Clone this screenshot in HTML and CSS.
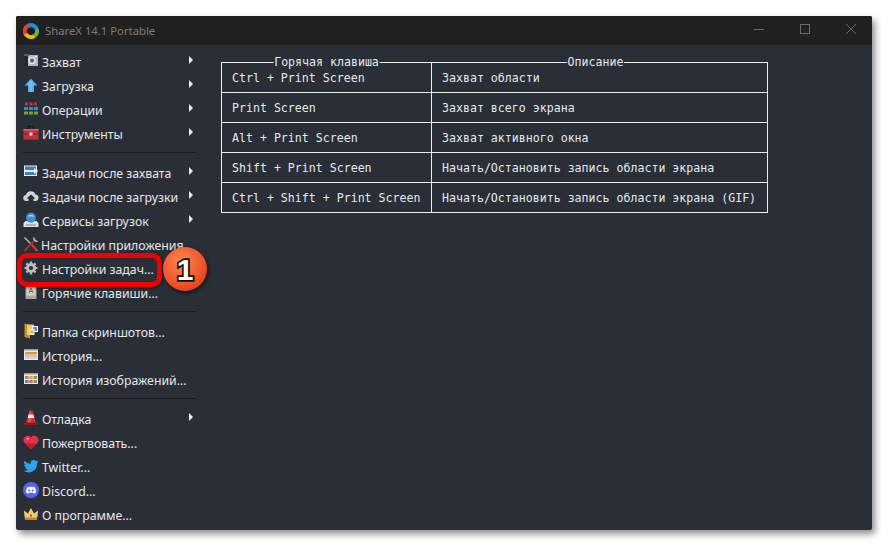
FILE: index.html
```html
<!DOCTYPE html>
<html lang="ru">
<head>
<meta charset="utf-8">
<title>ShareX</title>
<link rel="stylesheet" href="styles.css">
</head>
<body>
<div class="window">
  <header class="titlebar">
    <svg class="logo" width="16" height="16" viewBox="0 0 16 16" fill="none" stroke-width="4">
      <path d="M2.800 11.500A6 6 0 0 1 6 2.300" stroke="#e5402a"/>
      <path d="M5.500 2.600A6 6 0 0 1 13.900 7" stroke="#1d8fe3"/>
      <path d="M13.900 6.500A6 6 0 0 1 10.500 13.500" stroke="#63b52c"/>
      <path d="M11 13.200A6 6 0 0 1 2.600 10.800" stroke="#f5b70f"/>
      <circle cx="8" cy="8" r="2.500" fill="#17191d" stroke="none"/>
    </svg>
    <span class="title">ShareX 14.1 Portable</span>
    <div class="controls">
      <svg width="12" height="12" viewBox="0 0 12 12"><path d="M1 6.500H11" stroke="#6b6b6b" fill="none"/></svg>
      <svg width="12" height="12" viewBox="0 0 12 12"><rect x="1.500" y="1.500" width="9" height="9" stroke="#6b6b6b" fill="none"/></svg>
      <svg width="12" height="12" viewBox="0 0 12 12"><path d="M1 1L11 11M11 1L1 11" stroke="#6b6b6b" fill="none"/></svg>
    </div>
  </header>
  <div class="main">
    <nav class="menu">
      <div class="item sub"><svg class="ic" viewBox="0 0 16 16"><rect x="1" y="2" width="14" height="11" fill="#b5b5b5"/><rect x="1" y="3" width="4" height="10" fill="#26262a"/><rect x="1" y="1" width="5" height="2" fill="#5a5a5a"/><rect x="12" y="3" width="2" height="1" fill="#eee"/><circle cx="9" cy="7.500" r="3.800" fill="#e4e4ec"/><circle cx="9" cy="7.500" r="2.200" fill="#6a76a8"/><circle cx="9" cy="7.500" r="1" fill="#3d4570"/></svg><span>Захват</span></div>
      <div class="item sub"><svg class="ic" viewBox="0 0 16 16"><path d="M8 1.500L14.500 8.500H11V15H5V8.500H1.500Z" fill="#46a6f0"/><path d="M8 3L12 8.500H9.500V15H6.500V8.500H4Z" fill="#6fbef5"/></svg><span>Загрузка</span></div>
      <div class="item sub"><svg class="ic" viewBox="0 0 16 16"><g fill="#c8343c"><rect x="2" y="1.500" width="3" height="3"/><rect x="6.500" y="1.500" width="3" height="3"/><rect x="11" y="1.500" width="3" height="3"/></g><g fill="#2e8fd8"><rect x="1" y="6" width="4" height="3"/><rect x="6" y="6" width="4" height="3"/><rect x="11" y="6" width="4" height="3"/></g><g fill="#6bab2e"><rect x="1" y="10.500" width="4" height="3"/><rect x="6" y="10.500" width="4" height="3"/><rect x="11" y="10.500" width="4" height="3"/></g></svg><span>Операции</span></div>
      <div class="item sub"><svg class="ic" viewBox="0 0 16 16"><path d="M5.500 4V1.500H10.500V4" stroke="#1a1a1a" stroke-width="1.400" fill="none"/><rect x="0.500" y="4" width="15" height="10.500" fill="#c0323a"/><rect x="0.500" y="8.500" width="15" height="1" fill="#7d1a1f"/><rect x="0.500" y="4" width="15" height="1.500" fill="#df6066"/><rect x="6.500" y="7.500" width="3" height="3" fill="#f0dede"/></svg><span>Инструменты</span></div>
      <hr class="sep">
      <div class="item sub"><svg class="ic" viewBox="0 0 16 16"><rect x="1" y="1.500" width="13" height="10.500" fill="#eceff3"/><rect x="2" y="2.500" width="11" height="8.500" fill="#3f7fc0"/><path d="M2 6H11V4L15.500 7L11 10V8H2Z" fill="#e6eef8"/></svg><span>Задачи после захвата</span></div>
      <div class="item sub"><svg class="ic" viewBox="0 0 16 16"><path d="M3.500 13A3 3 0 0 1 3 7A5 5 0 0 1 12.500 6.500A3.300 3.300 0 0 1 13 13H10.500V10.500H12.500L8 6.500L3.500 10.500H5.500V13Z" fill="#d0d3d8"/></svg><span>Задачи после загрузки</span></div>
      <div class="item sub"><svg class="ic" viewBox="0 0 16 16"><path d="M2.500 9H13.500L15.500 11V15H0.500V11Z" fill="#dfe2e6"/><rect x="3" y="12.500" width="10" height="1" fill="#7f868c"/><circle cx="8" cy="5.800" r="5" fill="#3f8ed8"/><path d="M4.500 4.500A4 3.200 0 0 1 11.500 4.500Z" fill="#a3d0f2"/></svg><span>Сервисы загрузок</span></div>
      <div class="item tight"><svg class="ic" viewBox="0 0 16 16"><path d="M1.500 1.500L8 8" stroke="#c6c6c6" stroke-width="1.300"/><path d="M8 8L14.500 15" stroke="#d83a3a" stroke-width="2"/><path d="M12.500 3.500L1.500 14.500" stroke="#b02a2a" stroke-width="1.800"/><path d="M11 1.500A2.800 2.800 0 0 0 14.500 5" stroke="#c6c6c6" stroke-width="1.500" fill="none"/></svg><span>Настройки приложения</span></div>
      <div class="item"><svg class="ic" viewBox="0 0 16 16"><circle cx="8" cy="8" r="3.600" fill="none" stroke="#bcbcbc" stroke-width="3"/><path d="M8 1.500V14.500M1.500 8H14.500M3.400 3.400L12.600 12.600M12.600 3.400L3.400 12.600" stroke="#bcbcbc" stroke-width="2.200" stroke-dasharray="2.200 8.600"/></svg><span>Настройки задач...</span></div>
      <div class="item"><svg class="ic" viewBox="0 0 16 16"><rect x="2.500" y="1.500" width="11" height="13.500" fill="#a8a89e"/><rect x="3.500" y="2" width="9" height="9.500" fill="#d0d0c8"/><path d="M6 9L8 4L10 9M6.800 7.500H9.200" stroke="#666" stroke-width="0.900" fill="none"/></svg><span>Горячие клавиши...</span></div>
      <hr class="sep">
      <div class="item"><svg class="ic" viewBox="0 0 16 16"><path d="M1.500 0.500L7 2V15.500L1.500 14Z" fill="#c98f2a"/><path d="M4 1.500H11V12H4Z" fill="#f0c860"/><rect x="9" y="3" width="6" height="6" fill="#f4f4f4"/><rect x="10" y="4" width="4" height="4" fill="#4f93d6"/><rect x="6.500" y="6" width="5" height="6" fill="#fff3c8"/><rect x="7.500" y="7.500" width="3" height="3" fill="#e0a93c"/></svg><span>Папка скриншотов...</span></div>
      <div class="item"><svg class="ic" viewBox="0 0 16 16"><rect x="1" y="2" width="14" height="11" fill="#ececec"/><rect x="1" y="2" width="14" height="1.500" fill="#9a9a9a"/><rect x="2" y="5" width="12" height="2.500" fill="#d69b32"/><rect x="2" y="8.500" width="12" height="1" fill="#a5a5a5"/><rect x="2" y="10.500" width="12" height="1" fill="#bcbcbc"/></svg><span>История...</span></div>
      <div class="item"><svg class="ic" viewBox="0 0 16 16"><rect x="1" y="2" width="14" height="11" fill="#ececec"/><rect x="1" y="2" width="14" height="1.500" fill="#9a9a9a"/><rect x="2" y="5" width="3.500" height="3" fill="#c5803a"/><rect x="6.200" y="5" width="3.500" height="3" fill="#d6ab3a"/><rect x="10.500" y="5" width="3.500" height="3" fill="#a08a5a"/><rect x="2" y="9" width="3.500" height="3" fill="#5b87c0"/><rect x="6.200" y="9" width="3.500" height="3" fill="#b86b9a"/><rect x="10.500" y="9" width="3.500" height="3" fill="#7fa54a"/></svg><span>История изображений...</span></div>
      <hr class="sep">
      <div class="item sub"><svg class="ic" viewBox="0 0 16 16"><path d="M6.500 0.500H9.500L13 13H3Z" fill="#d23030"/><path d="M5.600 4.500H10.400L11.300 8H4.700Z" fill="#f3e8e2"/><path d="M6 1.500H8V13H5Z" fill="#ffffff" opacity=".18"/><rect x="1" y="12.500" width="14" height="2.500" fill="#8a1c1c"/></svg><span>Отладка</span></div>
      <div class="item"><svg class="ic" viewBox="0 0 16 16"><path d="M8 15.500L1.300 8.500A4 4 0 0 1 8 3.500A4 4 0 0 1 14.700 8.500Z" fill="#e6304a"/><path d="M8 15.500L3 9.500H13Z" fill="#b81d35"/><rect x="3.500" y="4" width="2.500" height="1.500" fill="#f58b9a"/></svg><span>Пожертвовать...</span></div>
      <div class="item"><svg class="ic" viewBox="0 0 16 16"><path d="M15.500 3.500A6 6 0 0 1 13.700 4.100A3 3 0 0 0 15 2.400A6 6 0 0 1 13 3.100A3 3 0 0 0 7.800 5.900A8.500 8.500 0 0 1 1.500 2.800A3 3 0 0 0 2.500 6.800A3 3 0 0 1 1 6.400A3 3 0 0 0 3.500 9.400A3 3 0 0 1 2 9.500A3 3 0 0 0 5 11.500A6 6 0 0 1 0.500 12.800A8.500 8.500 0 0 0 14 5.200A6 6 0 0 0 15.500 3.500Z" fill="#2fa3ee"/></svg><span>Twitter...</span></div>
      <div class="item"><svg class="ic" viewBox="0 0 16 16"><circle cx="8" cy="8" r="8" fill="#5865f2"/><path d="M4.300 5.300Q8 4 11.700 5.300Q13.200 8 13 10.600Q11.700 11.600 10.500 11.600L10 10.700H6L5.500 11.600Q4.300 11.600 3 10.600Q2.800 8 4.300 5.300Z" fill="#fff"/><circle cx="6.200" cy="8.500" r="1.100" fill="#5865f2"/><circle cx="9.800" cy="8.500" r="1.100" fill="#5865f2"/></svg><span>Discord...</span></div>
      <div class="item"><svg class="ic" viewBox="0 0 16 16"><path d="M2 13.500L0.800 4.500L5 7.500L8 2L11 7.500L15.200 4.500L14 13.500Z" fill="#f0cc72"/><rect x="2" y="11.500" width="12" height="2.500" fill="#c08a24"/><rect x="7" y="8.500" width="2" height="2" fill="#d8402c"/></svg><span>О программе...</span></div>
    </nav>
    <section class="content">
      <table class="keys">
        <thead>
          <tr><th class="col-key"><span>Горячая клавиша</span></th><th class="col-desc"><span>Описание</span></th></tr>
        </thead>
        <tbody>
          <tr><td>Ctrl + Print Screen</td><td>Захват области</td></tr>
          <tr><td>Print Screen</td><td>Захват всего экрана</td></tr>
          <tr><td>Alt + Print Screen</td><td>Захват активного окна</td></tr>
          <tr><td>Shift + Print Screen</td><td>Начать/Остановить запись области экрана</td></tr>
          <tr><td>Ctrl + Shift + Print Screen</td><td>Начать/Остановить запись области экрана (GIF)</td></tr>
        </tbody>
      </table>
    </section>
  </div>
  <div class="highlight"></div>
  <div class="badge">1</div>
</div>
</body>
</html>
```
FILE: styles.css
```css
* { box-sizing: border-box; }
html, body { margin: 0; height: 100%; background: #fff; overflow: hidden; }
body { padding: 16px; }
.window {
  position: relative;
  width: 856px;
  height: 514px;
  background: #2a2e37;
  border-radius: 2px;
  box-shadow: 3px 4px 7px rgba(0,0,0,.45);
  display: flex;
  flex-direction: column;
  font-family: "Noto Sans", "Open Sans", sans-serif;
  color: #e6e8ea;
}
.titlebar {
  height: 29px;
  flex: none;
  background: #202020;
  display: flex;
  align-items: center;
  padding-left: 7px;
  border-radius: 2px 2px 0 0;
}
.logo { flex: none; }
.title { margin-left: 6px; font-size: 11.3px; color: #7e7e7e; }
.controls { margin-left: auto; display: flex; gap: 34px; padding-right: 15px; margin-top: -3px; }
.controls svg { display: block; }
.main { flex: 1; display: flex; min-height: 0; }
.menu { width: 180px; flex: none; padding: 5px 0 0 7px; }
.item {
  height: 24px;
  display: flex;
  align-items: center;
  font-size: 12.3px;
  position: relative;
  white-space: nowrap;
}
.item span { margin-left: 3px; }
.item.tight span { margin-left: 2px; }
.ic { width: 16px; height: 16px; flex: none; margin-top: -3px; }
.item.sub::after {
  content: "";
  position: absolute;
  left: 166px;
  top: 6px;
  border-left: 4px solid #f0f0f0;
  border-top: 4px solid transparent;
  border-bottom: 4px solid transparent;
}
.sep {
  height: 1px;
  border: 0;
  background: #17191e;
  margin: 6px 0 8px 0;
  width: 173px;
}
.content { flex: 1; padding: 17px 0 0 25px; }
.keys {
  border-collapse: collapse;
  table-layout: fixed;
  width: 547px;
  font-family: "DejaVu Sans Mono", monospace;
  font-size: 11.6px;
  color: #e4ebeb;
}
.keys th {
  height: 0;
  padding: 0;
  font-weight: normal;
  border: 0;
  position: relative;
}
.col-key { width: 210px; }
.keys th span {
  position: absolute;
  left: 50%;
  top: -6px;
  transform: translateX(-50%);
  background: #2a2e37;
  padding: 0 1px;
  line-height: 12px;
  height: 12px;
  white-space: nowrap;
}
.col-desc span { margin-left: -4px; }
.keys td {
  height: 30px;
  padding: 0 10px;
  border: 1px solid #e8f2ee;
  white-space: nowrap;
}
.highlight {
  position: absolute;
  left: 1px;
  top: 237px;
  width: 145px;
  height: 34px;
  border: 5px solid #f00000;
  border-radius: 10px;
  box-shadow: 1px 1px 3px rgba(0,0,0,.5);
}
.badge {
  position: absolute;
  left: 147px;
  top: 231px;
  width: 44px;
  height: 44px;
  border-radius: 50%;
  background: radial-gradient(circle at 42% 35%, #fb8a50, #f0562a 55%, #dd2f12 90%);
  box-shadow: 1px 2px 4px rgba(0,0,0,.6);
  color: #fff;
  font-family: "Liberation Sans", sans-serif;
  font-weight: bold;
  font-size: 30px;
  line-height: 46px;
  text-align: center;
  -webkit-text-stroke: 3.500px #111;
  paint-order: stroke fill;
}
```
